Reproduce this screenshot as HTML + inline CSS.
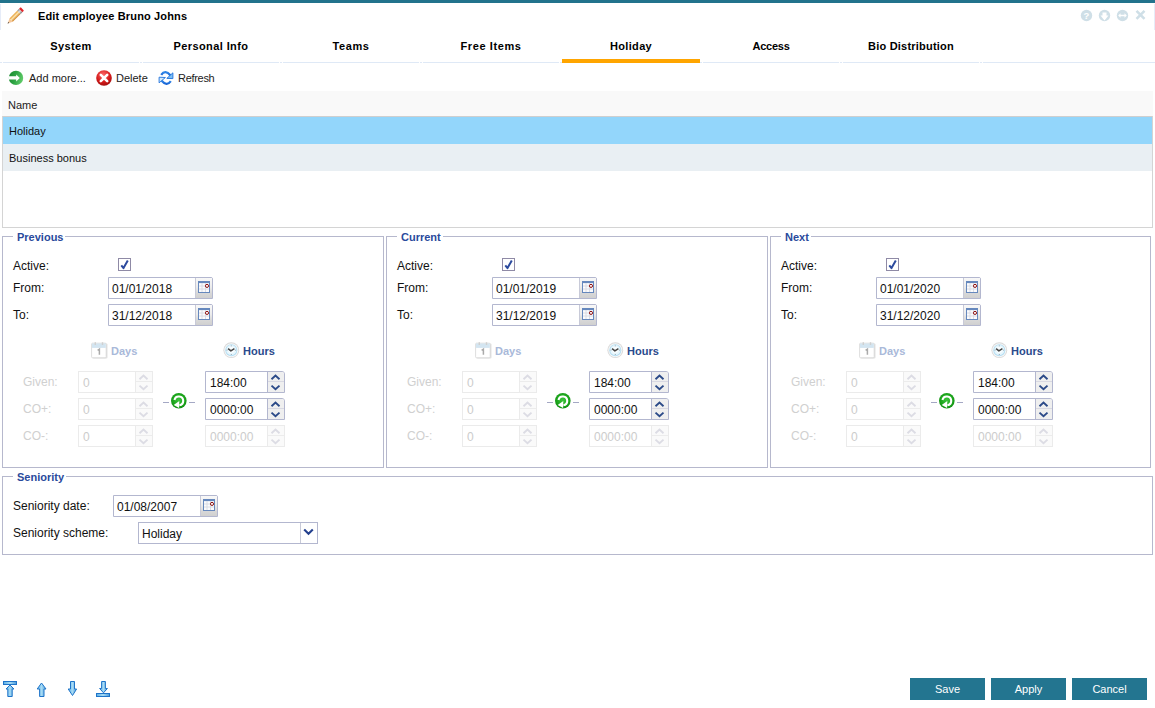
<!DOCTYPE html>
<html><head><meta charset="utf-8"><style>
html,body{margin:0;padding:0;}
body{width:1155px;height:708px;overflow:hidden;position:relative;background:#fff;font-family:"Liberation Sans", sans-serif;}
.t{position:absolute;white-space:nowrap;line-height:14px;font-family:"Liberation Sans", sans-serif;}
svg{display:block}
</style></head><body>
<div style="position:absolute;left:0px;top:0px;width:1155px;height:3px;background:#22738c"></div><div style="position:absolute;left:0px;top:4px;width:1px;height:26px;background:#e6ecf8"></div><div style="position:absolute;left:1154px;top:4px;width:1px;height:26px;background:#e6ecf8"></div><svg style="position:absolute;left:6px;top:7px" width="19" height="19" viewBox="0 0 19 19">
<defs><linearGradient id="pg" x1="0" y1="0" x2="0" y2="1"><stop offset="0" stop-color="#e59a2c"/><stop offset="0.45" stop-color="#fde6b0"/><stop offset="1" stop-color="#cf8124"/></linearGradient>
<linearGradient id="fg" x1="0" y1="0" x2="0" y2="1"><stop offset="0" stop-color="#8a8a8a"/><stop offset="0.5" stop-color="#e0e0e0"/><stop offset="1" stop-color="#7a7a7a"/></linearGradient></defs>
<g transform="translate(1.6 16.6) rotate(-45)">
<path d="M0 0 L5 -2.3 L5 2.3 Z" fill="#f6c79a"/>
<path d="M0 0 L1.6 -0.75 L1.6 0.75 Z" fill="#3a3a3a"/>
<rect x="5" y="-2.3" width="11" height="4.6" fill="url(#pg)"/>
<rect x="16" y="-2.4" width="2.6" height="4.8" fill="url(#fg)"/>
<rect x="18.6" y="-2.4" width="2.2" height="4.8" rx="0.6" fill="#e3262b"/>
</g>
</svg><div class="t" style="left:38px;top:9px;font-size:11px;font-weight:bold;color:#000;letter-spacing:0.15px">Edit employee Bruno Johns</div><svg style="position:absolute;left:1080px;top:9px" width="68" height="13" viewBox="0 0 68 13">
<circle cx="6.5" cy="6.5" r="5.7" fill="#cfdfe7"/>
<text x="6.5" y="10.3" font-family="Liberation Sans" font-weight="bold" font-size="9.5" fill="#fff" text-anchor="middle">?</text>
<circle cx="24.5" cy="6.5" r="5.7" fill="#cfdfe7"/>
<path d="M22.5 3.5 h4 v3 h2 l-4 5 l-4 -5 h2 z" fill="#fff"/>
<circle cx="42.5" cy="6.5" r="5.7" fill="#cfdfe7"/>
<path d="M38.2 6.5 l2.3 -2.3 v1.5 h4 v-1.5 l2.3 2.3 l-2.3 2.3 v-1.5 h-4 v1.5 z" fill="#fff"/>
<path d="M56.5 1.8 L64.5 9.8 M64.5 1.8 L56.5 9.8" stroke="#cfdfe7" stroke-width="2.6"/>
</svg><div class="t" style="left:-9px;width:160px;text-align:center;top:39px;font-size:11px;font-weight:bold;letter-spacing:0.4px;">System</div><div class="t" style="left:131px;width:160px;text-align:center;top:39px;font-size:11px;font-weight:bold;letter-spacing:0.4px;">Personal Info</div><div class="t" style="left:271px;width:160px;text-align:center;top:39px;font-size:11px;font-weight:bold;letter-spacing:0.6px;">Teams</div><div class="t" style="left:411px;width:160px;text-align:center;top:39px;font-size:11px;font-weight:bold;letter-spacing:0.6px;">Free Items</div><div class="t" style="left:551px;width:160px;text-align:center;top:39px;font-size:11px;font-weight:bold;letter-spacing:0.35px;">Holiday</div><div class="t" style="left:691px;width:160px;text-align:center;top:39px;font-size:11px;font-weight:bold;letter-spacing:-0.25px;">Access</div><div class="t" style="left:831px;width:160px;text-align:center;top:39px;font-size:11px;font-weight:bold;letter-spacing:0.22px;">Bio Distribution</div><div style="position:absolute;left:0px;top:62px;width:1155px;height:1px;background:#dfe9f6"></div><div style="position:absolute;left:2px;top:62px;width:1px;height:1px;background:#fff"></div><div style="position:absolute;left:139px;top:62px;width:1px;height:1px;background:#fff"></div><div style="position:absolute;left:142px;top:62px;width:1px;height:1px;background:#fff"></div><div style="position:absolute;left:279px;top:62px;width:1px;height:1px;background:#fff"></div><div style="position:absolute;left:282px;top:62px;width:1px;height:1px;background:#fff"></div><div style="position:absolute;left:419px;top:62px;width:1px;height:1px;background:#fff"></div><div style="position:absolute;left:422px;top:62px;width:1px;height:1px;background:#fff"></div><div style="position:absolute;left:559px;top:62px;width:1px;height:1px;background:#fff"></div><div style="position:absolute;left:562px;top:62px;width:1px;height:1px;background:#fff"></div><div style="position:absolute;left:699px;top:62px;width:1px;height:1px;background:#fff"></div><div style="position:absolute;left:702px;top:62px;width:1px;height:1px;background:#fff"></div><div style="position:absolute;left:839px;top:62px;width:1px;height:1px;background:#fff"></div><div style="position:absolute;left:842px;top:62px;width:1px;height:1px;background:#fff"></div><div style="position:absolute;left:979px;top:62px;width:1px;height:1px;background:#fff"></div><div style="position:absolute;left:982px;top:62px;width:1px;height:1px;background:#fff"></div><div style="position:absolute;left:562px;top:59px;width:138px;height:4px;background:#ffa500"></div><svg style="position:absolute;left:4px;top:66px" width="24" height="24" viewBox="0 0 24 24">
<defs><linearGradient id="gg" x1="0" y1="0" x2="1" y2="0.3"><stop offset="0" stop-color="#17872c"/><stop offset="0.55" stop-color="#2fa444"/><stop offset="1" stop-color="#5cc866"/></linearGradient></defs>
<circle cx="16" cy="11.9" r="7.2" fill="url(#gg)" transform="translate(-4 0)"/>
<path d="M4.6 10.3 H12.2 V8.4 L15.8 11.9 L12.2 15.4 V13.5 H4.6 Z" fill="#fff"/>
</svg><div class="t" style="left:29px;top:71px;font-size:11px;font-weight:normal;color:#222;">Add more...</div><svg style="position:absolute;left:96px;top:70px" width="17" height="17" viewBox="0 0 17 17">
<defs><radialGradient id="rg" cx="0.45" cy="0.3" r="0.75"><stop offset="0" stop-color="#ff6a6a"/><stop offset="0.6" stop-color="#d41a1a"/><stop offset="1" stop-color="#9a0c0c"/></radialGradient></defs>
<circle cx="8" cy="8" r="7.8" fill="url(#rg)"/>
<path d="M4.8 4.8 L11.2 11.2 M11.2 4.8 L4.8 11.2" stroke="#fff" stroke-width="2.6" stroke-linecap="round"/>
</svg><div class="t" style="left:116px;top:71px;font-size:11px;font-weight:normal;color:#222;">Delete</div><svg style="position:absolute;left:154px;top:66px" width="24" height="24" viewBox="0 0 24 24">
<defs><linearGradient id="rfg" x1="0" y1="0" x2="0" y2="1"><stop offset="0" stop-color="#2f86e8"/><stop offset="1" stop-color="#1a66d6"/></linearGradient></defs>
<path d="M7.2 8.8 Q11.2 3.2 16.6 9.4" fill="none" stroke="url(#rfg)" stroke-width="2.3"/>
<path d="M18.9 6.8 L18.9 12.6 L12.8 12.4 Z" fill="#7cc0f4" stroke="#1f70dc" stroke-width="0.9" stroke-linejoin="round"/>
<path d="M16.8 15.2 Q12.8 20.8 7.4 14.6" fill="none" stroke="url(#rfg)" stroke-width="2.3"/>
<path d="M5.1 11.2 L5.1 16.8 L11.4 11.5 Z" fill="#cfe9fb" stroke="#1f70dc" stroke-width="0.9" stroke-linejoin="round"/>
</svg><div class="t" style="left:178px;top:71px;font-size:11px;font-weight:normal;color:#222;letter-spacing:-0.3px">Refresh</div><div style="position:absolute;left:2px;top:91px;width:1151px;height:25px;background:#f9f9f9"></div><div class="t" style="left:8px;top:98px;font-size:11px;font-weight:normal;color:#222;">Name</div><div style="position:absolute;left:2px;top:116px;width:1151px;height:1px;background:#cfcfcf"></div><div style="position:absolute;left:2px;top:116px;width:1px;height:112px;background:#d4d4d4"></div><div style="position:absolute;left:1152px;top:116px;width:1px;height:112px;background:#d4d4d4"></div><div style="position:absolute;left:2px;top:227px;width:1151px;height:1px;background:#d4d4d4"></div><div style="position:absolute;left:3px;top:117px;width:1149px;height:27px;background:#93d6fb"></div><div class="t" style="left:9px;top:124px;font-size:11px;font-weight:normal;color:#111;">Holiday</div><div style="position:absolute;left:3px;top:144px;width:1149px;height:27px;background:#e9eff3"></div><div class="t" style="left:9px;top:151px;font-size:11px;font-weight:normal;color:#111;">Business bonus</div><div style="position:absolute;left:2px;top:236px;width:380px;height:230px;border:1px solid #b6b8cd"></div><div style="position:absolute;left:13px;top:236px;width:52px;height:1px;background:#fff"></div><div class="t" style="left:17px;top:230px;font-size:11px;font-weight:bold;color:#2a4a9c;">Previous</div><div class="t" style="left:13px;top:259px;font-size:12px;font-weight:normal;color:#111;">Active:</div><svg style="position:absolute;left:118px;top:258px" width="13" height="13" viewBox="0 0 13 13">
<rect x="0.5" y="0.5" width="12" height="12" fill="#fff" stroke="#8f8aa6" stroke-width="1"/>
<path d="M3.3 7.4 L5.5 10.1 L9.8 2.4" fill="none" stroke="#2c4a9e" stroke-width="2" stroke-linejoin="round"/>
</svg><div class="t" style="left:13px;top:281px;font-size:12px;font-weight:normal;color:#111;">From:</div><div style="position:absolute;left:108px;top:277px;width:103px;height:20px;border:1px solid #b3b7cf;border-top-right-radius:2px;background:#fff"></div><div style="position:absolute;left:195px;top:278px;width:16px;height:20px;border-left:1px solid #c8cad8;background:linear-gradient(#f8f8f8 0%,#ececec 45%,#d8d8d8 75%,#d0d0d0 100%)"></div><svg style="position:absolute;left:198px;top:281px" width="12" height="12" viewBox="0 0 12 12">
<rect x="0.5" y="0.5" width="11" height="11" fill="#fbfbfd" stroke="#6688bd"/>
<rect x="0.5" y="0.5" width="11" height="1.6" fill="#6688bd"/>
<path d="M1 5 H11 M1 8 H11 M4 2 V11 M7.5 2 V11" stroke="#d6d9e2" stroke-width="0.9"/>
<circle cx="9" cy="4.9" r="1.55" fill="#fff" stroke="#8e1010" stroke-width="1"/>
</svg><div class="t" style="left:112px;top:282px;font-size:12px;font-weight:normal;color:#111;">01/01/2018</div><div class="t" style="left:13px;top:308px;font-size:12px;font-weight:normal;color:#111;">To:</div><div style="position:absolute;left:108px;top:304px;width:103px;height:20px;border:1px solid #b3b7cf;border-top-right-radius:2px;background:#fff"></div><div style="position:absolute;left:195px;top:305px;width:16px;height:20px;border-left:1px solid #c8cad8;background:linear-gradient(#f8f8f8 0%,#ececec 45%,#d8d8d8 75%,#d0d0d0 100%)"></div><svg style="position:absolute;left:198px;top:308px" width="12" height="12" viewBox="0 0 12 12">
<rect x="0.5" y="0.5" width="11" height="11" fill="#fbfbfd" stroke="#6688bd"/>
<rect x="0.5" y="0.5" width="11" height="1.6" fill="#6688bd"/>
<path d="M1 5 H11 M1 8 H11 M4 2 V11 M7.5 2 V11" stroke="#d6d9e2" stroke-width="0.9"/>
<circle cx="9" cy="4.9" r="1.55" fill="#fff" stroke="#8e1010" stroke-width="1"/>
</svg><div class="t" style="left:112px;top:309px;font-size:12px;font-weight:normal;color:#111;">31/12/2018</div><svg style="position:absolute;left:91px;top:342px" width="17" height="17" viewBox="0 0 17 17">
<rect x="1.5" y="1.5" width="15" height="15" rx="1" fill="#e2e2e2"/>
<rect x="0.6" y="1.2" width="14.6" height="14.6" rx="1" fill="#fff" stroke="#d4d4d4" stroke-width="0.8"/>
<rect x="1" y="1.5" width="13.8" height="4.4" fill="#d3e5f1"/>
<rect x="3.6" y="0.2" width="1.4" height="2.8" fill="#d0d0d0"/><rect x="10.8" y="0.2" width="1.4" height="2.8" fill="#d0d0d0"/>
<path d="M6.6 8.4 L8.4 7.2 V12.8" fill="none" stroke="#aaaaaa" stroke-width="1.5"/>
</svg><div class="t" style="left:111px;top:344px;font-size:11px;font-weight:bold;color:#a9b9d9;">Days</div><svg style="position:absolute;left:223px;top:342px" width="17" height="17" viewBox="0 0 17 17">
<circle cx="8.3" cy="8.2" r="7.9" fill="#d9d9d9"/>
<circle cx="8.3" cy="8.2" r="7.0" fill="#f6f6f6"/>
<circle cx="8.3" cy="8.2" r="6.0" fill="#b4def3"/>
<circle cx="8.3" cy="8.2" r="5.1" fill="#e6f6fd"/>
<circle cx="8.3" cy="7.8" r="3.2" fill="#f8fdff"/>
<path d="M8.3 3.4 V4.3 M8.3 12.1 V13 M3.5 8.2 H4.4 M12.2 8.2 H13.1" stroke="#8a9aa6" stroke-width="0.9"/>
<path d="M5.1 6.7 L7.9 8.9 L11.4 6.7" fill="none" stroke="#454545" stroke-width="1.5" stroke-linejoin="round"/>
</svg><div class="t" style="left:243px;top:344px;font-size:11px;font-weight:bold;color:#2a4a8c;">Hours</div><div class="t" style="left:23px;top:375px;font-size:12px;font-weight:normal;color:#d0d0d0;">Given:</div><div style="position:absolute;left:78px;top:371px;width:73px;height:20px;border:1px solid #ebebeb;border-top-right-radius:0px;background:#fff"></div><div style="position:absolute;left:135px;top:372px;width:16px;height:20px;border-left:1px solid #ebebeb;background:#fafafa;border-top-right-radius:0px"></div><div style="position:absolute;left:136px;top:381px;width:16px;height:1px;background:#ececec"></div><svg style="position:absolute;left:138px;top:373px" width="11" height="18" viewBox="0 0 11 18">
<path d="M1.5 6.2 L5.5 2.6 L9.5 6.2" fill="none" stroke="#dcdce4" stroke-width="1.9"/>
<path d="M1.5 12.6 L5.5 16.2 L9.5 12.6" fill="none" stroke="#dcdce4" stroke-width="1.9"/>
</svg><div class="t" style="left:83px;top:376px;font-size:12px;font-weight:normal;color:#cccccc;">0</div><div class="t" style="left:23px;top:402px;font-size:12px;font-weight:normal;color:#d0d0d0;">CO+:</div><div style="position:absolute;left:78px;top:398px;width:73px;height:20px;border:1px solid #ebebeb;border-top-right-radius:0px;background:#fff"></div><div style="position:absolute;left:135px;top:399px;width:16px;height:20px;border-left:1px solid #ebebeb;background:#fafafa;border-top-right-radius:0px"></div><div style="position:absolute;left:136px;top:408px;width:16px;height:1px;background:#ececec"></div><svg style="position:absolute;left:138px;top:400px" width="11" height="18" viewBox="0 0 11 18">
<path d="M1.5 6.2 L5.5 2.6 L9.5 6.2" fill="none" stroke="#dcdce4" stroke-width="1.9"/>
<path d="M1.5 12.6 L5.5 16.2 L9.5 12.6" fill="none" stroke="#dcdce4" stroke-width="1.9"/>
</svg><div class="t" style="left:83px;top:403px;font-size:12px;font-weight:normal;color:#cccccc;">0</div><div class="t" style="left:23px;top:429px;font-size:12px;font-weight:normal;color:#d0d0d0;">CO-:</div><div style="position:absolute;left:78px;top:425px;width:73px;height:20px;border:1px solid #ebebeb;border-top-right-radius:0px;background:#fff"></div><div style="position:absolute;left:135px;top:426px;width:16px;height:20px;border-left:1px solid #ebebeb;background:#fafafa;border-top-right-radius:0px"></div><div style="position:absolute;left:136px;top:435px;width:16px;height:1px;background:#ececec"></div><svg style="position:absolute;left:138px;top:427px" width="11" height="18" viewBox="0 0 11 18">
<path d="M1.5 6.2 L5.5 2.6 L9.5 6.2" fill="none" stroke="#dcdce4" stroke-width="1.9"/>
<path d="M1.5 12.6 L5.5 16.2 L9.5 12.6" fill="none" stroke="#dcdce4" stroke-width="1.9"/>
</svg><div class="t" style="left:83px;top:430px;font-size:12px;font-weight:normal;color:#cccccc;">0</div><div style="position:absolute;left:205px;top:371px;width:78px;height:20px;border:1px solid #b3b7cf;border-top-right-radius:3px;background:#fff"></div><div style="position:absolute;left:267px;top:372px;width:16px;height:20px;border-left:1px solid #b3b7cf;background:#efefef;border-top-right-radius:2px"></div><div style="position:absolute;left:268px;top:381px;width:16px;height:1px;background:#d8d8e2"></div><svg style="position:absolute;left:270px;top:373px" width="11" height="18" viewBox="0 0 11 18">
<path d="M1.5 6.2 L5.5 2.6 L9.5 6.2" fill="none" stroke="#2b4a88" stroke-width="1.9"/>
<path d="M1.5 12.6 L5.5 16.2 L9.5 12.6" fill="none" stroke="#2b4a88" stroke-width="1.9"/>
</svg><div class="t" style="left:210px;top:376px;font-size:12px;font-weight:normal;color:#111;">184:00</div><div style="position:absolute;left:205px;top:398px;width:78px;height:20px;border:1px solid #b3b7cf;border-top-right-radius:3px;background:#fff"></div><div style="position:absolute;left:267px;top:399px;width:16px;height:20px;border-left:1px solid #b3b7cf;background:#efefef;border-top-right-radius:2px"></div><div style="position:absolute;left:268px;top:408px;width:16px;height:1px;background:#d8d8e2"></div><svg style="position:absolute;left:270px;top:400px" width="11" height="18" viewBox="0 0 11 18">
<path d="M1.5 6.2 L5.5 2.6 L9.5 6.2" fill="none" stroke="#2b4a88" stroke-width="1.9"/>
<path d="M1.5 12.6 L5.5 16.2 L9.5 12.6" fill="none" stroke="#2b4a88" stroke-width="1.9"/>
</svg><div class="t" style="left:210px;top:403px;font-size:12px;font-weight:normal;color:#111;">0000:00</div><div style="position:absolute;left:205px;top:425px;width:78px;height:20px;border:1px solid #ebebeb;border-top-right-radius:0px;background:#fff"></div><div style="position:absolute;left:267px;top:426px;width:16px;height:20px;border-left:1px solid #ebebeb;background:#fafafa;border-top-right-radius:0px"></div><div style="position:absolute;left:268px;top:435px;width:16px;height:1px;background:#ececec"></div><svg style="position:absolute;left:270px;top:427px" width="11" height="18" viewBox="0 0 11 18">
<path d="M1.5 6.2 L5.5 2.6 L9.5 6.2" fill="none" stroke="#dcdce4" stroke-width="1.9"/>
<path d="M1.5 12.6 L5.5 16.2 L9.5 12.6" fill="none" stroke="#dcdce4" stroke-width="1.9"/>
</svg><div class="t" style="left:210px;top:430px;font-size:12px;font-weight:normal;color:#cccccc;">0000:00</div><svg style="position:absolute;left:167px;top:389px" width="24" height="24" viewBox="0 0 24 24">
<defs><radialGradient id="gr167" cx="0.5" cy="0.45" r="0.55"><stop offset="0" stop-color="#3cc43c"/><stop offset="0.75" stop-color="#1aa31a"/><stop offset="1" stop-color="#128c12"/></radialGradient></defs>
<circle cx="11.8" cy="11.8" r="7.8" fill="url(#gr167)"/>
<path d="M7.5 11.0 A4.4 4.4 0 1 1 12.4 16.2" fill="none" stroke="#fff" stroke-width="2.1"/>
<path d="M6.7 15.9 L12.3 12.1 L12.1 18.9 Z" fill="#fff"/>
</svg><div style="position:absolute;left:163px;top:402px;width:6px;height:1px;background:#a4a8c4"></div><div style="position:absolute;left:189px;top:402px;width:6px;height:1px;background:#a4a8c4"></div><div style="position:absolute;left:386px;top:236px;width:380px;height:230px;border:1px solid #b6b8cd"></div><div style="position:absolute;left:397px;top:236px;width:46px;height:1px;background:#fff"></div><div class="t" style="left:401px;top:230px;font-size:11px;font-weight:bold;color:#2a4a9c;">Current</div><div class="t" style="left:397px;top:259px;font-size:12px;font-weight:normal;color:#111;">Active:</div><svg style="position:absolute;left:502px;top:258px" width="13" height="13" viewBox="0 0 13 13">
<rect x="0.5" y="0.5" width="12" height="12" fill="#fff" stroke="#8f8aa6" stroke-width="1"/>
<path d="M3.3 7.4 L5.5 10.1 L9.8 2.4" fill="none" stroke="#2c4a9e" stroke-width="2" stroke-linejoin="round"/>
</svg><div class="t" style="left:397px;top:281px;font-size:12px;font-weight:normal;color:#111;">From:</div><div style="position:absolute;left:492px;top:277px;width:103px;height:20px;border:1px solid #b3b7cf;border-top-right-radius:2px;background:#fff"></div><div style="position:absolute;left:579px;top:278px;width:16px;height:20px;border-left:1px solid #c8cad8;background:linear-gradient(#f8f8f8 0%,#ececec 45%,#d8d8d8 75%,#d0d0d0 100%)"></div><svg style="position:absolute;left:582px;top:281px" width="12" height="12" viewBox="0 0 12 12">
<rect x="0.5" y="0.5" width="11" height="11" fill="#fbfbfd" stroke="#6688bd"/>
<rect x="0.5" y="0.5" width="11" height="1.6" fill="#6688bd"/>
<path d="M1 5 H11 M1 8 H11 M4 2 V11 M7.5 2 V11" stroke="#d6d9e2" stroke-width="0.9"/>
<circle cx="9" cy="4.9" r="1.55" fill="#fff" stroke="#8e1010" stroke-width="1"/>
</svg><div class="t" style="left:496px;top:282px;font-size:12px;font-weight:normal;color:#111;">01/01/2019</div><div class="t" style="left:397px;top:308px;font-size:12px;font-weight:normal;color:#111;">To:</div><div style="position:absolute;left:492px;top:304px;width:103px;height:20px;border:1px solid #b3b7cf;border-top-right-radius:2px;background:#fff"></div><div style="position:absolute;left:579px;top:305px;width:16px;height:20px;border-left:1px solid #c8cad8;background:linear-gradient(#f8f8f8 0%,#ececec 45%,#d8d8d8 75%,#d0d0d0 100%)"></div><svg style="position:absolute;left:582px;top:308px" width="12" height="12" viewBox="0 0 12 12">
<rect x="0.5" y="0.5" width="11" height="11" fill="#fbfbfd" stroke="#6688bd"/>
<rect x="0.5" y="0.5" width="11" height="1.6" fill="#6688bd"/>
<path d="M1 5 H11 M1 8 H11 M4 2 V11 M7.5 2 V11" stroke="#d6d9e2" stroke-width="0.9"/>
<circle cx="9" cy="4.9" r="1.55" fill="#fff" stroke="#8e1010" stroke-width="1"/>
</svg><div class="t" style="left:496px;top:309px;font-size:12px;font-weight:normal;color:#111;">31/12/2019</div><svg style="position:absolute;left:475px;top:342px" width="17" height="17" viewBox="0 0 17 17">
<rect x="1.5" y="1.5" width="15" height="15" rx="1" fill="#e2e2e2"/>
<rect x="0.6" y="1.2" width="14.6" height="14.6" rx="1" fill="#fff" stroke="#d4d4d4" stroke-width="0.8"/>
<rect x="1" y="1.5" width="13.8" height="4.4" fill="#d3e5f1"/>
<rect x="3.6" y="0.2" width="1.4" height="2.8" fill="#d0d0d0"/><rect x="10.8" y="0.2" width="1.4" height="2.8" fill="#d0d0d0"/>
<path d="M6.6 8.4 L8.4 7.2 V12.8" fill="none" stroke="#aaaaaa" stroke-width="1.5"/>
</svg><div class="t" style="left:495px;top:344px;font-size:11px;font-weight:bold;color:#a9b9d9;">Days</div><svg style="position:absolute;left:607px;top:342px" width="17" height="17" viewBox="0 0 17 17">
<circle cx="8.3" cy="8.2" r="7.9" fill="#d9d9d9"/>
<circle cx="8.3" cy="8.2" r="7.0" fill="#f6f6f6"/>
<circle cx="8.3" cy="8.2" r="6.0" fill="#b4def3"/>
<circle cx="8.3" cy="8.2" r="5.1" fill="#e6f6fd"/>
<circle cx="8.3" cy="7.8" r="3.2" fill="#f8fdff"/>
<path d="M8.3 3.4 V4.3 M8.3 12.1 V13 M3.5 8.2 H4.4 M12.2 8.2 H13.1" stroke="#8a9aa6" stroke-width="0.9"/>
<path d="M5.1 6.7 L7.9 8.9 L11.4 6.7" fill="none" stroke="#454545" stroke-width="1.5" stroke-linejoin="round"/>
</svg><div class="t" style="left:627px;top:344px;font-size:11px;font-weight:bold;color:#2a4a8c;">Hours</div><div class="t" style="left:407px;top:375px;font-size:12px;font-weight:normal;color:#d0d0d0;">Given:</div><div style="position:absolute;left:462px;top:371px;width:73px;height:20px;border:1px solid #ebebeb;border-top-right-radius:0px;background:#fff"></div><div style="position:absolute;left:519px;top:372px;width:16px;height:20px;border-left:1px solid #ebebeb;background:#fafafa;border-top-right-radius:0px"></div><div style="position:absolute;left:520px;top:381px;width:16px;height:1px;background:#ececec"></div><svg style="position:absolute;left:522px;top:373px" width="11" height="18" viewBox="0 0 11 18">
<path d="M1.5 6.2 L5.5 2.6 L9.5 6.2" fill="none" stroke="#dcdce4" stroke-width="1.9"/>
<path d="M1.5 12.6 L5.5 16.2 L9.5 12.6" fill="none" stroke="#dcdce4" stroke-width="1.9"/>
</svg><div class="t" style="left:467px;top:376px;font-size:12px;font-weight:normal;color:#cccccc;">0</div><div class="t" style="left:407px;top:402px;font-size:12px;font-weight:normal;color:#d0d0d0;">CO+:</div><div style="position:absolute;left:462px;top:398px;width:73px;height:20px;border:1px solid #ebebeb;border-top-right-radius:0px;background:#fff"></div><div style="position:absolute;left:519px;top:399px;width:16px;height:20px;border-left:1px solid #ebebeb;background:#fafafa;border-top-right-radius:0px"></div><div style="position:absolute;left:520px;top:408px;width:16px;height:1px;background:#ececec"></div><svg style="position:absolute;left:522px;top:400px" width="11" height="18" viewBox="0 0 11 18">
<path d="M1.5 6.2 L5.5 2.6 L9.5 6.2" fill="none" stroke="#dcdce4" stroke-width="1.9"/>
<path d="M1.5 12.6 L5.5 16.2 L9.5 12.6" fill="none" stroke="#dcdce4" stroke-width="1.9"/>
</svg><div class="t" style="left:467px;top:403px;font-size:12px;font-weight:normal;color:#cccccc;">0</div><div class="t" style="left:407px;top:429px;font-size:12px;font-weight:normal;color:#d0d0d0;">CO-:</div><div style="position:absolute;left:462px;top:425px;width:73px;height:20px;border:1px solid #ebebeb;border-top-right-radius:0px;background:#fff"></div><div style="position:absolute;left:519px;top:426px;width:16px;height:20px;border-left:1px solid #ebebeb;background:#fafafa;border-top-right-radius:0px"></div><div style="position:absolute;left:520px;top:435px;width:16px;height:1px;background:#ececec"></div><svg style="position:absolute;left:522px;top:427px" width="11" height="18" viewBox="0 0 11 18">
<path d="M1.5 6.2 L5.5 2.6 L9.5 6.2" fill="none" stroke="#dcdce4" stroke-width="1.9"/>
<path d="M1.5 12.6 L5.5 16.2 L9.5 12.6" fill="none" stroke="#dcdce4" stroke-width="1.9"/>
</svg><div class="t" style="left:467px;top:430px;font-size:12px;font-weight:normal;color:#cccccc;">0</div><div style="position:absolute;left:589px;top:371px;width:78px;height:20px;border:1px solid #b3b7cf;border-top-right-radius:3px;background:#fff"></div><div style="position:absolute;left:651px;top:372px;width:16px;height:20px;border-left:1px solid #b3b7cf;background:#efefef;border-top-right-radius:2px"></div><div style="position:absolute;left:652px;top:381px;width:16px;height:1px;background:#d8d8e2"></div><svg style="position:absolute;left:654px;top:373px" width="11" height="18" viewBox="0 0 11 18">
<path d="M1.5 6.2 L5.5 2.6 L9.5 6.2" fill="none" stroke="#2b4a88" stroke-width="1.9"/>
<path d="M1.5 12.6 L5.5 16.2 L9.5 12.6" fill="none" stroke="#2b4a88" stroke-width="1.9"/>
</svg><div class="t" style="left:594px;top:376px;font-size:12px;font-weight:normal;color:#111;">184:00</div><div style="position:absolute;left:589px;top:398px;width:78px;height:20px;border:1px solid #b3b7cf;border-top-right-radius:3px;background:#fff"></div><div style="position:absolute;left:651px;top:399px;width:16px;height:20px;border-left:1px solid #b3b7cf;background:#efefef;border-top-right-radius:2px"></div><div style="position:absolute;left:652px;top:408px;width:16px;height:1px;background:#d8d8e2"></div><svg style="position:absolute;left:654px;top:400px" width="11" height="18" viewBox="0 0 11 18">
<path d="M1.5 6.2 L5.5 2.6 L9.5 6.2" fill="none" stroke="#2b4a88" stroke-width="1.9"/>
<path d="M1.5 12.6 L5.5 16.2 L9.5 12.6" fill="none" stroke="#2b4a88" stroke-width="1.9"/>
</svg><div class="t" style="left:594px;top:403px;font-size:12px;font-weight:normal;color:#111;">0000:00</div><div style="position:absolute;left:589px;top:425px;width:78px;height:20px;border:1px solid #ebebeb;border-top-right-radius:0px;background:#fff"></div><div style="position:absolute;left:651px;top:426px;width:16px;height:20px;border-left:1px solid #ebebeb;background:#fafafa;border-top-right-radius:0px"></div><div style="position:absolute;left:652px;top:435px;width:16px;height:1px;background:#ececec"></div><svg style="position:absolute;left:654px;top:427px" width="11" height="18" viewBox="0 0 11 18">
<path d="M1.5 6.2 L5.5 2.6 L9.5 6.2" fill="none" stroke="#dcdce4" stroke-width="1.9"/>
<path d="M1.5 12.6 L5.5 16.2 L9.5 12.6" fill="none" stroke="#dcdce4" stroke-width="1.9"/>
</svg><div class="t" style="left:594px;top:430px;font-size:12px;font-weight:normal;color:#cccccc;">0000:00</div><svg style="position:absolute;left:551px;top:389px" width="24" height="24" viewBox="0 0 24 24">
<defs><radialGradient id="gr551" cx="0.5" cy="0.45" r="0.55"><stop offset="0" stop-color="#3cc43c"/><stop offset="0.75" stop-color="#1aa31a"/><stop offset="1" stop-color="#128c12"/></radialGradient></defs>
<circle cx="11.8" cy="11.8" r="7.8" fill="url(#gr551)"/>
<path d="M7.5 11.0 A4.4 4.4 0 1 1 12.4 16.2" fill="none" stroke="#fff" stroke-width="2.1"/>
<path d="M6.7 15.9 L12.3 12.1 L12.1 18.9 Z" fill="#fff"/>
</svg><div style="position:absolute;left:547px;top:402px;width:6px;height:1px;background:#a4a8c4"></div><div style="position:absolute;left:573px;top:402px;width:6px;height:1px;background:#a4a8c4"></div><div style="position:absolute;left:770px;top:236px;width:379px;height:230px;border:1px solid #b6b8cd"></div><div style="position:absolute;left:781px;top:236px;width:30px;height:1px;background:#fff"></div><div class="t" style="left:785px;top:230px;font-size:11px;font-weight:bold;color:#2a4a9c;">Next</div><div class="t" style="left:781px;top:259px;font-size:12px;font-weight:normal;color:#111;">Active:</div><svg style="position:absolute;left:886px;top:258px" width="13" height="13" viewBox="0 0 13 13">
<rect x="0.5" y="0.5" width="12" height="12" fill="#fff" stroke="#8f8aa6" stroke-width="1"/>
<path d="M3.3 7.4 L5.5 10.1 L9.8 2.4" fill="none" stroke="#2c4a9e" stroke-width="2" stroke-linejoin="round"/>
</svg><div class="t" style="left:781px;top:281px;font-size:12px;font-weight:normal;color:#111;">From:</div><div style="position:absolute;left:876px;top:277px;width:103px;height:20px;border:1px solid #b3b7cf;border-top-right-radius:2px;background:#fff"></div><div style="position:absolute;left:963px;top:278px;width:16px;height:20px;border-left:1px solid #c8cad8;background:linear-gradient(#f8f8f8 0%,#ececec 45%,#d8d8d8 75%,#d0d0d0 100%)"></div><svg style="position:absolute;left:966px;top:281px" width="12" height="12" viewBox="0 0 12 12">
<rect x="0.5" y="0.5" width="11" height="11" fill="#fbfbfd" stroke="#6688bd"/>
<rect x="0.5" y="0.5" width="11" height="1.6" fill="#6688bd"/>
<path d="M1 5 H11 M1 8 H11 M4 2 V11 M7.5 2 V11" stroke="#d6d9e2" stroke-width="0.9"/>
<circle cx="9" cy="4.9" r="1.55" fill="#fff" stroke="#8e1010" stroke-width="1"/>
</svg><div class="t" style="left:880px;top:282px;font-size:12px;font-weight:normal;color:#111;">01/01/2020</div><div class="t" style="left:781px;top:308px;font-size:12px;font-weight:normal;color:#111;">To:</div><div style="position:absolute;left:876px;top:304px;width:103px;height:20px;border:1px solid #b3b7cf;border-top-right-radius:2px;background:#fff"></div><div style="position:absolute;left:963px;top:305px;width:16px;height:20px;border-left:1px solid #c8cad8;background:linear-gradient(#f8f8f8 0%,#ececec 45%,#d8d8d8 75%,#d0d0d0 100%)"></div><svg style="position:absolute;left:966px;top:308px" width="12" height="12" viewBox="0 0 12 12">
<rect x="0.5" y="0.5" width="11" height="11" fill="#fbfbfd" stroke="#6688bd"/>
<rect x="0.5" y="0.5" width="11" height="1.6" fill="#6688bd"/>
<path d="M1 5 H11 M1 8 H11 M4 2 V11 M7.5 2 V11" stroke="#d6d9e2" stroke-width="0.9"/>
<circle cx="9" cy="4.9" r="1.55" fill="#fff" stroke="#8e1010" stroke-width="1"/>
</svg><div class="t" style="left:880px;top:309px;font-size:12px;font-weight:normal;color:#111;">31/12/2020</div><svg style="position:absolute;left:859px;top:342px" width="17" height="17" viewBox="0 0 17 17">
<rect x="1.5" y="1.5" width="15" height="15" rx="1" fill="#e2e2e2"/>
<rect x="0.6" y="1.2" width="14.6" height="14.6" rx="1" fill="#fff" stroke="#d4d4d4" stroke-width="0.8"/>
<rect x="1" y="1.5" width="13.8" height="4.4" fill="#d3e5f1"/>
<rect x="3.6" y="0.2" width="1.4" height="2.8" fill="#d0d0d0"/><rect x="10.8" y="0.2" width="1.4" height="2.8" fill="#d0d0d0"/>
<path d="M6.6 8.4 L8.4 7.2 V12.8" fill="none" stroke="#aaaaaa" stroke-width="1.5"/>
</svg><div class="t" style="left:879px;top:344px;font-size:11px;font-weight:bold;color:#a9b9d9;">Days</div><svg style="position:absolute;left:991px;top:342px" width="17" height="17" viewBox="0 0 17 17">
<circle cx="8.3" cy="8.2" r="7.9" fill="#d9d9d9"/>
<circle cx="8.3" cy="8.2" r="7.0" fill="#f6f6f6"/>
<circle cx="8.3" cy="8.2" r="6.0" fill="#b4def3"/>
<circle cx="8.3" cy="8.2" r="5.1" fill="#e6f6fd"/>
<circle cx="8.3" cy="7.8" r="3.2" fill="#f8fdff"/>
<path d="M8.3 3.4 V4.3 M8.3 12.1 V13 M3.5 8.2 H4.4 M12.2 8.2 H13.1" stroke="#8a9aa6" stroke-width="0.9"/>
<path d="M5.1 6.7 L7.9 8.9 L11.4 6.7" fill="none" stroke="#454545" stroke-width="1.5" stroke-linejoin="round"/>
</svg><div class="t" style="left:1011px;top:344px;font-size:11px;font-weight:bold;color:#2a4a8c;">Hours</div><div class="t" style="left:791px;top:375px;font-size:12px;font-weight:normal;color:#d0d0d0;">Given:</div><div style="position:absolute;left:846px;top:371px;width:73px;height:20px;border:1px solid #ebebeb;border-top-right-radius:0px;background:#fff"></div><div style="position:absolute;left:903px;top:372px;width:16px;height:20px;border-left:1px solid #ebebeb;background:#fafafa;border-top-right-radius:0px"></div><div style="position:absolute;left:904px;top:381px;width:16px;height:1px;background:#ececec"></div><svg style="position:absolute;left:906px;top:373px" width="11" height="18" viewBox="0 0 11 18">
<path d="M1.5 6.2 L5.5 2.6 L9.5 6.2" fill="none" stroke="#dcdce4" stroke-width="1.9"/>
<path d="M1.5 12.6 L5.5 16.2 L9.5 12.6" fill="none" stroke="#dcdce4" stroke-width="1.9"/>
</svg><div class="t" style="left:851px;top:376px;font-size:12px;font-weight:normal;color:#cccccc;">0</div><div class="t" style="left:791px;top:402px;font-size:12px;font-weight:normal;color:#d0d0d0;">CO+:</div><div style="position:absolute;left:846px;top:398px;width:73px;height:20px;border:1px solid #ebebeb;border-top-right-radius:0px;background:#fff"></div><div style="position:absolute;left:903px;top:399px;width:16px;height:20px;border-left:1px solid #ebebeb;background:#fafafa;border-top-right-radius:0px"></div><div style="position:absolute;left:904px;top:408px;width:16px;height:1px;background:#ececec"></div><svg style="position:absolute;left:906px;top:400px" width="11" height="18" viewBox="0 0 11 18">
<path d="M1.5 6.2 L5.5 2.6 L9.5 6.2" fill="none" stroke="#dcdce4" stroke-width="1.9"/>
<path d="M1.5 12.6 L5.5 16.2 L9.5 12.6" fill="none" stroke="#dcdce4" stroke-width="1.9"/>
</svg><div class="t" style="left:851px;top:403px;font-size:12px;font-weight:normal;color:#cccccc;">0</div><div class="t" style="left:791px;top:429px;font-size:12px;font-weight:normal;color:#d0d0d0;">CO-:</div><div style="position:absolute;left:846px;top:425px;width:73px;height:20px;border:1px solid #ebebeb;border-top-right-radius:0px;background:#fff"></div><div style="position:absolute;left:903px;top:426px;width:16px;height:20px;border-left:1px solid #ebebeb;background:#fafafa;border-top-right-radius:0px"></div><div style="position:absolute;left:904px;top:435px;width:16px;height:1px;background:#ececec"></div><svg style="position:absolute;left:906px;top:427px" width="11" height="18" viewBox="0 0 11 18">
<path d="M1.5 6.2 L5.5 2.6 L9.5 6.2" fill="none" stroke="#dcdce4" stroke-width="1.9"/>
<path d="M1.5 12.6 L5.5 16.2 L9.5 12.6" fill="none" stroke="#dcdce4" stroke-width="1.9"/>
</svg><div class="t" style="left:851px;top:430px;font-size:12px;font-weight:normal;color:#cccccc;">0</div><div style="position:absolute;left:973px;top:371px;width:78px;height:20px;border:1px solid #b3b7cf;border-top-right-radius:3px;background:#fff"></div><div style="position:absolute;left:1035px;top:372px;width:16px;height:20px;border-left:1px solid #b3b7cf;background:#efefef;border-top-right-radius:2px"></div><div style="position:absolute;left:1036px;top:381px;width:16px;height:1px;background:#d8d8e2"></div><svg style="position:absolute;left:1038px;top:373px" width="11" height="18" viewBox="0 0 11 18">
<path d="M1.5 6.2 L5.5 2.6 L9.5 6.2" fill="none" stroke="#2b4a88" stroke-width="1.9"/>
<path d="M1.5 12.6 L5.5 16.2 L9.5 12.6" fill="none" stroke="#2b4a88" stroke-width="1.9"/>
</svg><div class="t" style="left:978px;top:376px;font-size:12px;font-weight:normal;color:#111;">184:00</div><div style="position:absolute;left:973px;top:398px;width:78px;height:20px;border:1px solid #b3b7cf;border-top-right-radius:3px;background:#fff"></div><div style="position:absolute;left:1035px;top:399px;width:16px;height:20px;border-left:1px solid #b3b7cf;background:#efefef;border-top-right-radius:2px"></div><div style="position:absolute;left:1036px;top:408px;width:16px;height:1px;background:#d8d8e2"></div><svg style="position:absolute;left:1038px;top:400px" width="11" height="18" viewBox="0 0 11 18">
<path d="M1.5 6.2 L5.5 2.6 L9.5 6.2" fill="none" stroke="#2b4a88" stroke-width="1.9"/>
<path d="M1.5 12.6 L5.5 16.2 L9.5 12.6" fill="none" stroke="#2b4a88" stroke-width="1.9"/>
</svg><div class="t" style="left:978px;top:403px;font-size:12px;font-weight:normal;color:#111;">0000:00</div><div style="position:absolute;left:973px;top:425px;width:78px;height:20px;border:1px solid #ebebeb;border-top-right-radius:0px;background:#fff"></div><div style="position:absolute;left:1035px;top:426px;width:16px;height:20px;border-left:1px solid #ebebeb;background:#fafafa;border-top-right-radius:0px"></div><div style="position:absolute;left:1036px;top:435px;width:16px;height:1px;background:#ececec"></div><svg style="position:absolute;left:1038px;top:427px" width="11" height="18" viewBox="0 0 11 18">
<path d="M1.5 6.2 L5.5 2.6 L9.5 6.2" fill="none" stroke="#dcdce4" stroke-width="1.9"/>
<path d="M1.5 12.6 L5.5 16.2 L9.5 12.6" fill="none" stroke="#dcdce4" stroke-width="1.9"/>
</svg><div class="t" style="left:978px;top:430px;font-size:12px;font-weight:normal;color:#cccccc;">0000:00</div><svg style="position:absolute;left:935px;top:389px" width="24" height="24" viewBox="0 0 24 24">
<defs><radialGradient id="gr935" cx="0.5" cy="0.45" r="0.55"><stop offset="0" stop-color="#3cc43c"/><stop offset="0.75" stop-color="#1aa31a"/><stop offset="1" stop-color="#128c12"/></radialGradient></defs>
<circle cx="11.8" cy="11.8" r="7.8" fill="url(#gr935)"/>
<path d="M7.5 11.0 A4.4 4.4 0 1 1 12.4 16.2" fill="none" stroke="#fff" stroke-width="2.1"/>
<path d="M6.7 15.9 L12.3 12.1 L12.1 18.9 Z" fill="#fff"/>
</svg><div style="position:absolute;left:931px;top:402px;width:6px;height:1px;background:#a4a8c4"></div><div style="position:absolute;left:957px;top:402px;width:6px;height:1px;background:#a4a8c4"></div><div style="position:absolute;left:2px;top:476px;width:1149px;height:77px;border:1px solid #b6b8cd"></div><div style="position:absolute;left:13px;top:476px;width:53px;height:1px;background:#fff"></div><div class="t" style="left:17px;top:470px;font-size:11px;font-weight:bold;color:#2a4a9c;">Seniority</div><div class="t" style="left:13px;top:499px;font-size:12px;font-weight:normal;color:#111;">Seniority date:</div><div style="position:absolute;left:113px;top:495px;width:103px;height:20px;border:1px solid #b3b7cf;border-top-right-radius:2px;background:#fff"></div><div style="position:absolute;left:200px;top:496px;width:16px;height:20px;border-left:1px solid #c8cad8;background:linear-gradient(#f8f8f8 0%,#ececec 45%,#d8d8d8 75%,#d0d0d0 100%)"></div><svg style="position:absolute;left:203px;top:499px" width="12" height="12" viewBox="0 0 12 12">
<rect x="0.5" y="0.5" width="11" height="11" fill="#fbfbfd" stroke="#6688bd"/>
<rect x="0.5" y="0.5" width="11" height="1.6" fill="#6688bd"/>
<path d="M1 5 H11 M1 8 H11 M4 2 V11 M7.5 2 V11" stroke="#d6d9e2" stroke-width="0.9"/>
<circle cx="9" cy="4.9" r="1.55" fill="#fff" stroke="#8e1010" stroke-width="1"/>
</svg><div class="t" style="left:117px;top:500px;font-size:12px;font-weight:normal;color:#111;">01/08/2007</div><div class="t" style="left:13px;top:526px;font-size:12px;font-weight:normal;color:#111;">Seniority scheme:</div><div style="position:absolute;left:138px;top:522px;width:178px;height:20px;border:1px solid #b3b7cf;background:#fff"></div><div style="position:absolute;left:300px;top:523px;width:1px;height:20px;background:#c8cad8"></div><svg style="position:absolute;left:303px;top:528px" width="11" height="8" viewBox="0 0 11 8">
<path d="M1.2 1.6 L5.5 5.8 L9.8 1.6" fill="none" stroke="#23408e" stroke-width="2.1"/>
</svg><div class="t" style="left:142px;top:527px;font-size:12px;font-weight:normal;color:#111;">Holiday</div><svg style="position:absolute;left:2px;top:680px" width="112" height="19" viewBox="0 0 112 19">
<defs><linearGradient id="ag" x1="0" y1="0" x2="1" y2="0"><stop offset="0" stop-color="#5aaee6"/><stop offset="0.5" stop-color="#a8dcf5"/><stop offset="1" stop-color="#4a9ad8"/></linearGradient></defs>
<rect x="1.5" y="1.5" width="13" height="3" fill="url(#ag)" stroke="#1f74c9" stroke-width="1"/>
<path d="M8 5 L12 9 H10.2 V16.5 H5.8 V9 H4 Z" fill="url(#ag)" stroke="#1f74c9" stroke-width="1"/>
<path d="M39.5 3 L44 9 H42 V16.5 H37.6 V9 H35.2 Z" fill="url(#ag)" stroke="#1f74c9" stroke-width="1"/>
<path d="M68.5 1.5 H72.5 V9 H74.6 L70.5 15.5 L66.2 9 H68.5 Z" fill="url(#ag)" stroke="#1f74c9" stroke-width="1"/>
<path d="M99.6 1.5 H103.4 V8.5 H105.4 L101.5 12.8 L97.6 8.5 H99.6 Z" fill="url(#ag)" stroke="#1f74c9" stroke-width="1"/>
<rect x="94.5" y="13.5" width="13" height="3" fill="url(#ag)" stroke="#1f74c9" stroke-width="1"/>
</svg><div class="t" style="left:910px;top:678px;width:75px;height:22px;line-height:22px;background:#237590;color:#fff;text-align:center;font-size:11px">Save</div><div class="t" style="left:991px;top:678px;width:75px;height:22px;line-height:22px;background:#237590;color:#fff;text-align:center;font-size:11px">Apply</div><div class="t" style="left:1072px;top:678px;width:75px;height:22px;line-height:22px;background:#237590;color:#fff;text-align:center;font-size:11px">Cancel</div>
</body></html>
